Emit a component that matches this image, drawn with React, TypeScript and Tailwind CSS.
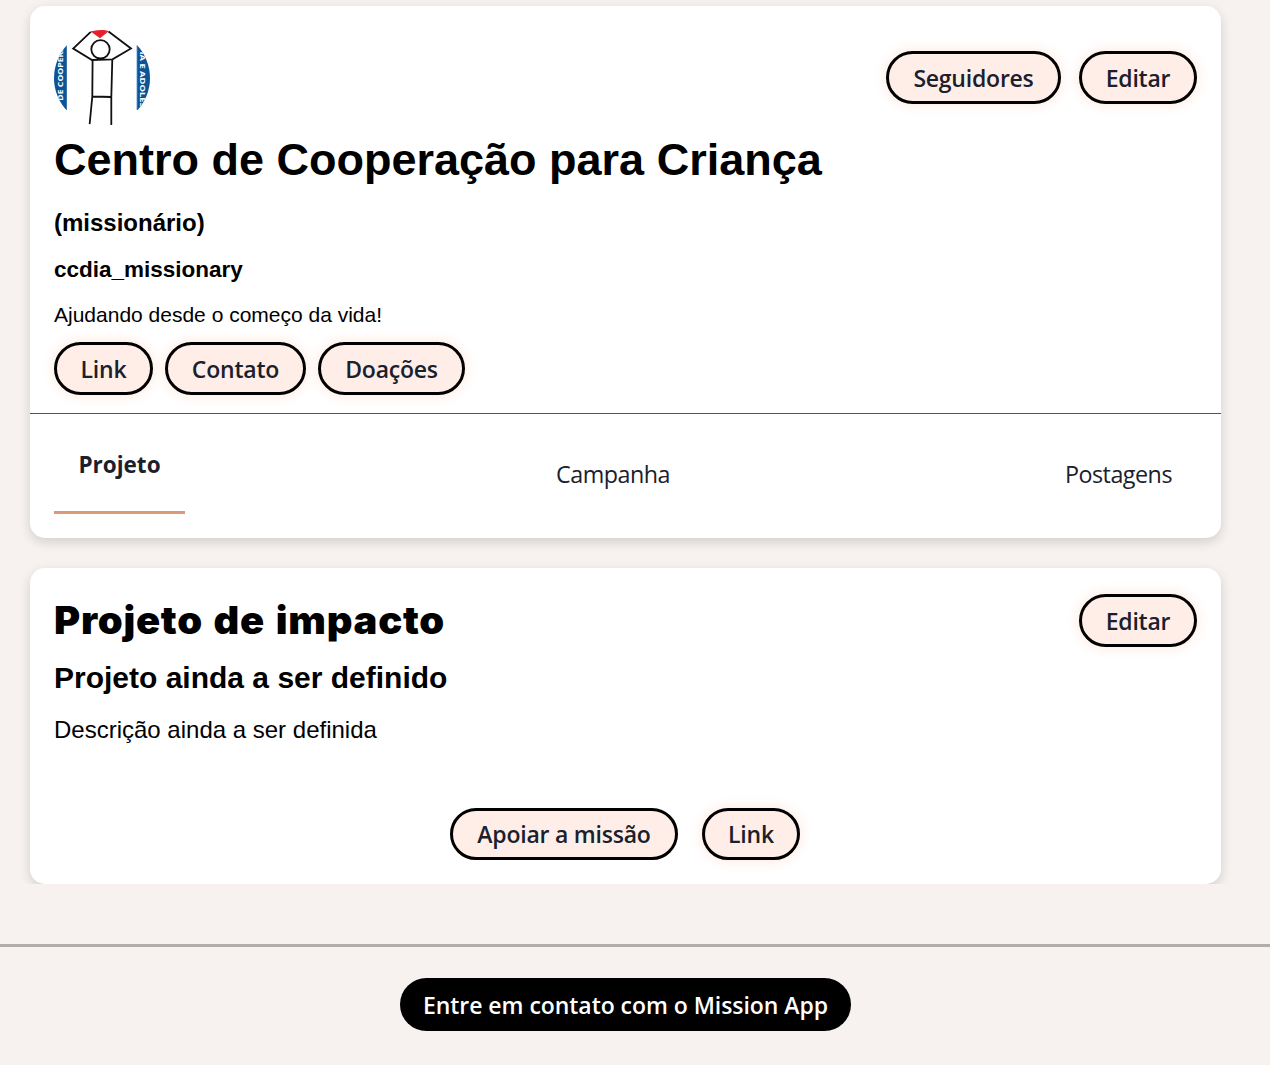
import type { ReactNode } from "react";
import clsx from "clsx";

function PillButton({ className, glow = true, children }: { className: string; glow?: boolean; children: ReactNode }) {
  return (
    <button
      className={clsx(
        "flex shrink-0 items-center justify-center whitespace-nowrap rounded-full border-[3px] border-black bg-[#ffeee7] font-['Open_Sans',sans-serif] text-[23px] leading-none font-semibold tracking-[-0.22px] text-[#1a202c]",
        glow && "shadow-[0_0_14px_#ffe4da]",
        className,
      )}
    >
      {children}
    </button>
  );
}

function Logo() {
  return (
    <svg className="block size-24" viewBox="0 0 96 96" role="img" aria-label="CCDIA">
      <defs>
        <clipPath id="avatar">
          <circle cx="48" cy="48" r="48" />
        </clipPath>
      </defs>
      <g clipPath="url(#avatar)">
        <rect width="96" height="96" fill="#fff" />
        <rect x="0" y="15" width="12.8" height="65" fill="#0d5496" />
        <rect x="83" y="15" width="13" height="65" fill="#0d5496" />
        <path d="M82.9 15V80" stroke="#6aa8dc" strokeWidth="0.8" />
        <g fill="#fff" fontFamily="'Open Sans', sans-serif" fontWeight="700" fontSize="7.8">
          <text transform="translate(8.800 70.700) rotate(-90)" textLength="55" lengthAdjust="spacingAndGlyphs">DE COOPERA</text>
          <text transform="translate(86 21.500) rotate(90)" textLength="62" lengthAdjust="spacingAndGlyphs">IA E ADOLESC</text>
        </g>
        <path d="M36 1Q45.500 -2 55 1L46 8.300Z" fill="#e8202b" />
        <g fill="none" stroke="#111" strokeWidth="1.8" strokeLinejoin="miter">
          <path d="M37 1.700L19.200 18.500L38 30L58.500 29.300L77 18.500L54.500 1.500" />
          <circle cx="46.500" cy="19.300" r="9.200" />
          <path d="M38.600 29.500L38.300 66.500L35.600 94.500M58.300 29.300L57.300 67V95M38.300 66.500L57.300 67" />
        </g>
      </g>
    </svg>
  );
}

export default function App() {
  return (
    <div className="flex h-[1065px] w-full flex-col overflow-hidden bg-[#f7f2f0] font-['Liberation_Sans',Arial,sans-serif] text-black">
      <main className="flex h-[884px] shrink-0 flex-col gap-[30px] overflow-hidden pt-[6px] pr-[49px] pl-[30px]">
        <section className="h-[532px] shrink-0 rounded-[15px] bg-white shadow-[0_4px_12px_rgba(0,0,0,0.15)]">
          <div className="flex h-[408px] flex-col border-b border-[#555] px-6 pt-6">
            <div className="flex h-24 items-start justify-between">
              <Logo />
              <div className="flex gap-[18px] pt-[21px]">
                <PillButton className="h-[53px] w-[175px] pt-[2px]">Seguidores</PillButton>
                <PillButton className="h-[53px] w-[118px] pt-[2px]">Editar</PillButton>
              </div>
            </div>
            <h1 className="mt-1 text-[45px] leading-[60px] font-bold">Centro de Cooperação para Criança</h1>
            <h3 className="mt-[9px] text-[24px] leading-[48px] font-bold">(missionário)</h3>
            <h4 className="mt-px text-[22.500px] leading-[44px] font-bold">ccdia_missionary</h4>
            <p className="mt-[2px] text-[21px] leading-[42px]">Ajudando desde o começo da vida!</p>
            <div className="mt-[6px] flex gap-3">
              <PillButton className="h-[53px] w-[99px] pt-[2px]">Link</PillButton>
              <PillButton className="h-[53px] w-[141px] pt-[2px]">Contato</PillButton>
              <PillButton className="h-[53px] w-[147px] pt-[2px]">Doações</PillButton>
            </div>
          </div>
          <nav className="flex h-[124px] items-center justify-between px-6 font-['Open_Sans',sans-serif] text-[23.300px] leading-none tracking-[-0.500px] text-[#1a202c]">
            <button className="flex h-[76px] w-[131px] justify-center border-b-[3px] border-[#dd9a7b] pt-[16px] text-[22.500px] font-bold tracking-normal">Projeto</button>
            <button className="px-[9px] pb-[2px]">Campanha</button>
            <button className="pr-[25px] pb-[2px] pl-6">Postagens</button>
          </nav>
        </section>
        <section className="flex h-[316px] shrink-0 flex-col rounded-[15px] bg-white px-6 pt-[26px] shadow-[0_4px_12px_rgba(0,0,0,0.15)]">
          <div className="flex h-[53px] items-center justify-between">
            <h2 className="origin-left scale-x-[1.05] font-['Inter',sans-serif] text-[38px] leading-[53px] font-black tracking-[0.700px] [word-spacing:2px]">Projeto de impacto</h2>
            <PillButton className="h-[53px] w-[118px] pt-[2px]">Editar</PillButton>
          </div>
          <h3 className="mt-[10px] text-[30px] leading-[42px] font-bold">Projeto ainda a ser definido</h3>
          <p className="mt-[13px] text-[24px] leading-[36px]">Descrição ainda a ser definida</p>
          <div className="mt-[60px] flex justify-center gap-6 pr-px">
            <PillButton className="h-[52px] w-[228px] pt-px" glow={false}>Apoiar a missão</PillButton>
            <PillButton className="h-[52px] w-[98px] pt-px">Link</PillButton>
          </div>
        </section>
      </main>
      <footer className="mt-[60px] flex justify-center border-t-[3px] border-[#b0adac] pt-[31px] pr-[19px]">
        <button className="flex h-[53px] w-[451px] items-center justify-center rounded-full bg-black pt-[2px] font-['Open_Sans',sans-serif] text-[23px] leading-none font-semibold tracking-[-0.050px] whitespace-nowrap text-white">
          Entre em contato com o Mission App
        </button>
      </footer>
    </div>
  );
}
